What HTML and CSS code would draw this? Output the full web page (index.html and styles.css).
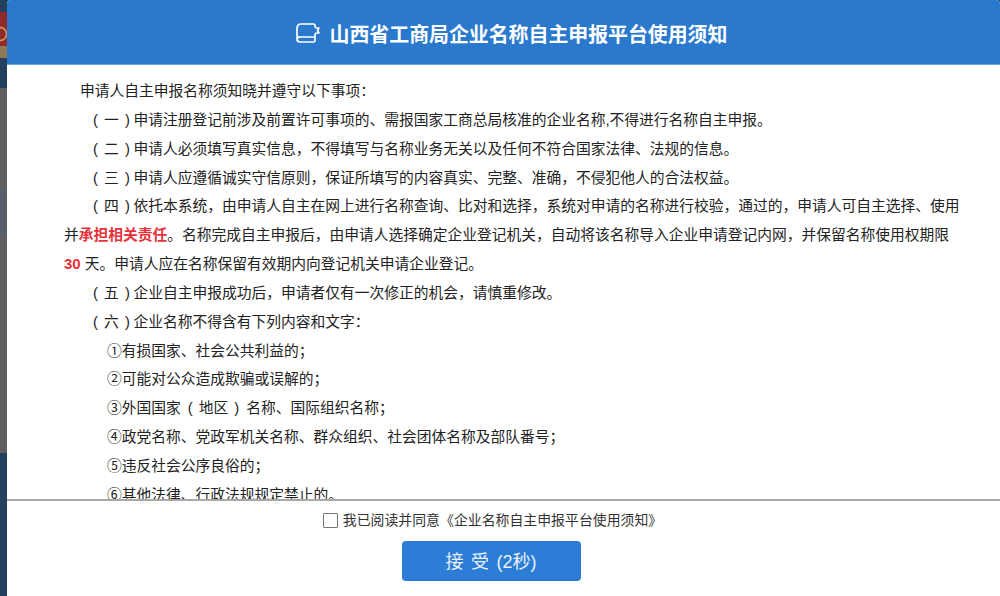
FILE: index.html
```html
<!DOCTYPE html>
<html lang="zh-CN">
<head>
<meta charset="utf-8">
<title>山西省工商局企业名称自主申报平台使用须知</title>
<link rel="stylesheet" href="styles.css">
</head>
<body>
<div class="backdrop">
  <svg class="emblem" viewBox="0 0 7 46" aria-hidden="true"><rect width="7" height="46" fill="#8e2a2c"/><circle cx="0" cy="22" r="6.500" fill="none" stroke="#c98f4e" stroke-width="1.8"/><rect y="34" width="7" height="12" fill="#8f7a58"/></svg>
</div>
<main class="dialog">
  <header class="head">
    <svg class="head-icon" viewBox="0 0 24 20" aria-hidden="true"><path d="M19 3V2.6A1.6 1.6 0 0 0 17.4 1H5A4 4 0 0 0 1 5v11a3 3 0 0 0 3 3h13.4a1.6 1.6 0 0 0 1.600-1.600V14H4.500A3.200 3.200 0 0 0 1 16.500" fill="none" stroke="#fff" stroke-width="1.7" stroke-linejoin="round"/><path d="M19 3c0 1.200.7 2 2 2h2l-1.500 2.500L23 10h-2c-1.300 0-2 .8-2 2v2" fill="none" stroke="#fff" stroke-width="1.6" stroke-linejoin="round"/></svg>
    <h1 class="head-title">山西省工商局企业名称自主申报平台使用须知</h1>
  </header>
  <section class="body">
    <p class="lead">申请人自主申报名称须知晓并遵守以下事项<i class="p">：</i></p>
    <p class="item"><span class="num">( 一 )</span>申请注册登记前涉及前置许可事项的、需报国家工商总局核准的企业名称,不得进行名称自主申报。</p>
    <p class="item"><span class="num">( 二 )</span>申请人必须填写真实信息<i class="p">，</i>不得填写与名称业务无关以及任何不符合国家法律、法规的信息。</p>
    <p class="item"><span class="num">( 三 )</span>申请人应遵循诚实守信原则<i class="p">，</i>保证所填写的内容真实、完整、准确<i class="p">，</i>不侵犯他人的合法权益。</p>
    <p class="item"><span class="num">( 四 )</span>依托本系统<i class="p">，</i>由申请人自主在网上进行名称查询、比对和选择<i class="p">，</i>系统对申请的名称进行校验<i class="p">，</i>通过的<i class="p">，</i>申请人可自主选择、使用并<b class="red">承担相关责任</b>。名称完成自主申报后<i class="p">，</i>由申请人选择确定企业登记机关<i class="p">，</i>自动将该名称导入企业申请登记内网<i class="p">，</i>并保留名称使用权期限 <b class="red num-red">30</b> 天。申请人应在名称保留有效期内向登记机关申请企业登记。</p>
    <p class="item"><span class="num">( 五 )</span>企业自主申报成功后<i class="p">，</i>申请者仅有一次修正的机会<i class="p">，</i>请慎重修改。</p>
    <p class="item"><span class="num">( 六 )</span>企业名称不得含有下列内容和文字<i class="p">：</i></p>
    <p class="sub">①有损国家、社会公共利益的<i class="p">；</i></p>
    <p class="sub">②可能对公众造成欺骗或误解的<i class="p">；</i></p>
    <p class="sub">③外国国家<span class="paren">( 地区 )</span>名称、国际组织名称<i class="p">；</i></p>
    <p class="sub">④政党名称、党政军机关名称、群众组织、社会团体名称及部队番号<i class="p">；</i></p>
    <p class="sub">⑤违反社会公序良俗的<i class="p">；</i></p>
    <p class="sub">⑥其他法律、行政法规规定禁止的。</p>
  </section>
  <footer class="foot">
    <label class="agree"><span class="box"></span>我已阅读并同意《企业名称自主申报平台使用须知》</label>
    <button class="accept" type="button">接 受 (2秒)</button>
  </footer>
</main>
</body>
</html>
```
FILE: styles.css
```css
* { box-sizing: border-box; }
html, body { margin: 0; height: 100%; overflow: hidden; }
body {
  display: flex;
  width: 1000px;
  height: 596px;
  background: #24405f;
  font-family: "Liberation Sans", "Noto Sans CJK SC", sans-serif;
  color: #222;
}
.backdrop {
  width: 7px;
  flex: none;
  background: linear-gradient(#24405f 0, #24405f 88px, #5f5f5f 88px, #5f5f5f 188px, #56606a 188px, #56606a 237px, #5f5f5f 237px, #5f5f5f 453px, #24405f 453px, #24405f 100%);
}
.emblem { display: block; width: 7px; height: 46px; margin-top: 12px; }
.dialog {
  flex: 1;
  min-width: 0;
  display: flex;
  flex-direction: column;
  background: #fff;
  border-top-left-radius: 4px;
  border-top-right-radius: 4px;
  overflow: hidden;
}
.head {
  flex: none;
  height: 65px;
  padding: 6px 0 0 16px;
  background: #2a79cd;
  border-bottom: 1px solid #6aa5e2;
  display: flex;
  align-items: center;
  justify-content: center;
  gap: 10px;
}
.head-icon { width: 24px; height: 20px; flex: none; margin-bottom: 4px; }
.head-title { margin: 0; font-size: 19.9px; font-weight: 700; color: #fff; line-height: 28px; }
.body {
  flex: 1;
  min-height: 0;
  overflow: hidden;
  padding: 12px 35px 0 57px;
  font-size: 14.75px;
  line-height: 28.85px;
  border-bottom: 2px solid #a8a8a8;
}
.body p { margin: 0; }
.lead { padding-left: 16px; }
.item { text-indent: 25.5px; }
.sub { padding-left: 43px; }
.num {
  display: inline-block;
  width: 44px;
  line-height: 1;
  text-indent: 0;
  text-align: center;
  word-spacing: 2px;
}
.paren { word-spacing: 2px; padding: 0 7px; }
.p { font-family: "Noto Sans CJK TC", sans-serif; font-style: normal; line-height: 0; }
.red { color: #e8323a; font-weight: 700; }
.num-red { font-size: 15px; }
.foot {
  flex: none;
  height: 95px;
  display: flex;
  flex-direction: column;
  align-items: center;
  padding: 9px 25px 0 0;
}
.agree {
  display: flex;
  align-items: center;
  gap: 5px;
  margin-left: 3px;
  font-size: 13.9px;
  line-height: 20px;
  color: #333;
}
.box { width: 15px; height: 15px; border: 1px solid #777; background: #fff; border-radius: 1px; }
.accept {
  margin-top: 11px;
  width: 179px;
  height: 40px;
  border: 0;
  border-radius: 4px;
  background: #2c7dd6;
  color: #eaf2fb;
  font: 18px/40px "Liberation Sans", "Noto Sans CJK SC", sans-serif;
  word-spacing: 2.5px;
}
```
